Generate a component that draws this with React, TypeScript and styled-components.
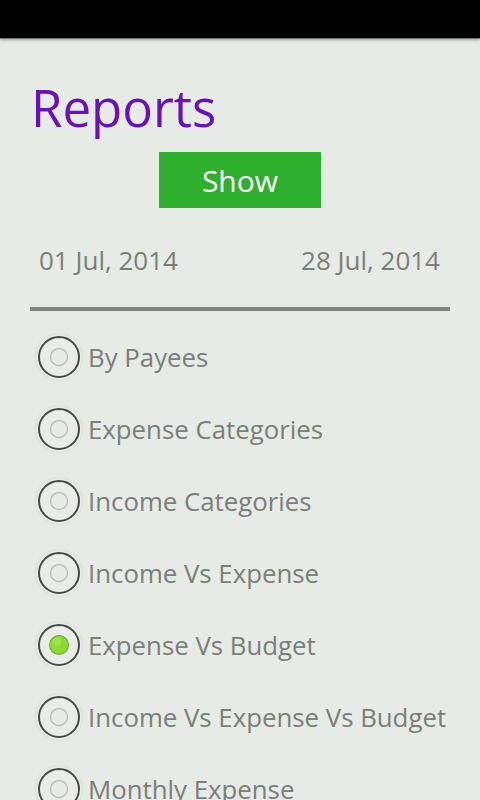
import styled, { createGlobalStyle } from 'styled-components';

const GlobalStyle = createGlobalStyle`
  html, body {
    margin: 0;
    padding: 0;
    background: #e6ebe5;
    font-family: "Open Sans", "Noto Sans", sans-serif;
  }
`;

const Screen = styled.div`
  width: 480px;
  height: 800px;
  overflow: hidden;
  background: #e6ebe5;
  display: flex;
  flex-direction: column;
`;

const StatusBar = styled.div`
  height: 38px;
  background: #000;
  flex: none;
  box-shadow: 0 1px 0 #6f746d, 0 2px 3px rgba(90, 96, 88, 0.5);
`;

const Content = styled.div`
  padding: 0 30px;
  display: flex;
  flex-direction: column;
`;

const Title = styled.h1`
  margin: 0;
  padding: 37px 0 0 1px;
  font-size: 51px;
  line-height: 64px;
  font-weight: 400;
  color: #6a10bd;
`;

const ShowButton = styled.button`
  align-self: center;
  margin-top: 13px;
  width: 162px;
  height: 56px;
  border: none;
  background: #2eb02e;
  color: #fff;
  font-family: inherit;
  font-size: 30px;
  padding: 0;
`;

const DateRow = styled.div`
  display: flex;
  justify-content: space-between;
  padding: 0 10px 0 9px;
  margin-top: 34px;
  font-size: 26px;
  line-height: 36px;
  color: #7a7f78;
`;

const Divider = styled.div`
  height: 4px;
  background: #80867e;
  margin-top: 29px;
`;

const List = styled.div`
  display: flex;
  flex-direction: column;
  margin-top: 10px;
`;

const Row = styled.label`
  display: flex;
  align-items: center;
  height: 72px;
  gap: 3px;
  padding-left: 3px;
  font-size: 25.8px;
  color: #7a7f78;
  white-space: nowrap;
`;

const Radio = ({ checked }: { checked?: boolean }) => (
  <svg width="52" height="52" viewBox="0 0 52 52">
    <circle cx="26" cy="26" r="24.5" fill="#dfe4de" />
    <circle cx="26" cy="26" r="22.5" fill="#e8ede7" />
    <circle cx="26" cy="26" r="20" fill="none" stroke="#464a47" strokeWidth="2" />
    {checked ? (
      <>
        <circle cx="26" cy="26" r="10" fill="#6aa82a" />
        <circle cx="26" cy="26" r="9" fill="#8cdb35" />
        <circle cx="24" cy="23" r="4" fill="#a6ec5a" opacity="0.6" />
      </>
    ) : (
      <circle cx="26" cy="26" r="8.5" fill="#e6ebe5" stroke="#b9beb8" strokeWidth="1.3" />
    )}
  </svg>
);

const reports = [
  'By Payees',
  'Expense Categories',
  'Income Categories',
  'Income Vs Expense',
  'Expense Vs Budget',
  'Income Vs Expense Vs Budget',
  'Monthly Expense',
];

export default function App() {
  return (
    <Screen>
      <GlobalStyle />
      <StatusBar />
      <Content>
        <Title>Reports</Title>
        <ShowButton>Show</ShowButton>
        <DateRow>
          <span>01 Jul, 2014</span>
          <span>28 Jul, 2014</span>
        </DateRow>
        <Divider />
        <List>
          {reports.map((r) => (
            <Row key={r}>
              <Radio checked={r === 'Expense Vs Budget'} />
              {r}
            </Row>
          ))}
        </List>
      </Content>
    </Screen>
  );
}
